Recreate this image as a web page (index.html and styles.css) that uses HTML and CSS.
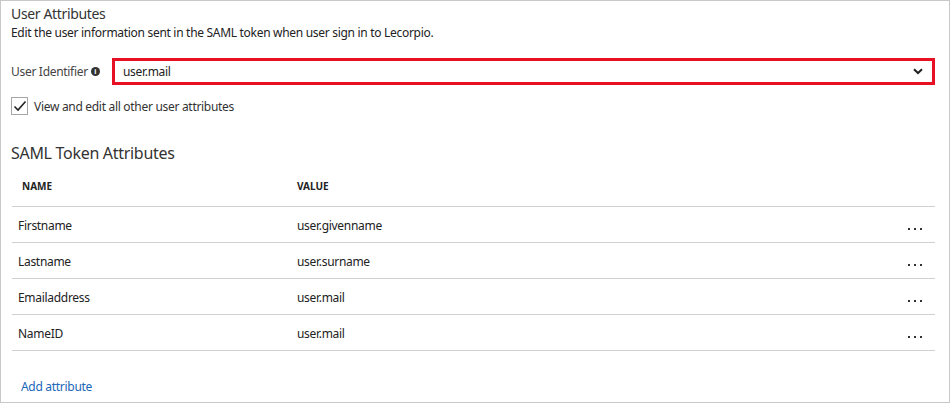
FILE: index.html
```html
<!DOCTYPE html>
<html>
<head>
<meta charset="utf-8">
<link rel="stylesheet" href="styles.css">
</head>
<body>
<div class="panel">
  <div class="title">User Attributes</div>
  <div class="desc">Edit the user information sent in the SAML token when user sign in to Lecorpio.</div>
  <div class="ident-row">
    <div class="ident-label">User Identifier <span class="info">i</span></div>
    <div class="select">
      <span>user.mail</span>
      <svg class="chev" width="10" height="7" viewBox="0 0 10 7"><path d="M1 1.2 L5 5 L9 1.2" fill="none" stroke="#222" stroke-width="2"/></svg>
    </div>
  </div>
  <div class="check-row">
    <div class="checkbox"><svg width="14" height="12" viewBox="0 0 14 12"><path d="M1.5 6.5 L5 10 L12.5 1.5" fill="none" stroke="#222" stroke-width="1.6"/></svg></div>
    <span>View and edit all other user attributes</span>
  </div>
  <div class="subtitle">SAML Token Attributes</div>
  <div class="table">
    <div class="thead">
      <div class="c-name">NAME</div>
      <div class="c-val">VALUE</div>
    </div>
    <div class="tr"><div class="c-name">Firstname</div><div class="c-val">user.givenname</div><div class="more"><i></i><i></i><i></i></div></div>
    <div class="tr"><div class="c-name">Lastname</div><div class="c-val">user.surname</div><div class="more"><i></i><i></i><i></i></div></div>
    <div class="tr"><div class="c-name">Emailaddress</div><div class="c-val">user.mail</div><div class="more"><i></i><i></i><i></i></div></div>
    <div class="tr"><div class="c-name">NameID</div><div class="c-val">user.mail</div><div class="more"><i></i><i></i><i></i></div></div>
  </div>
  <a class="add" href="#">Add attribute</a>
</div>
</body>
</html>
```
FILE: styles.css
```css
html, body {
  margin: 0;
  padding: 0;
  background: #fff;
}
body {
  font-family: "Noto Sans", "Open Sans", sans-serif;
  color: #222;
  letter-spacing: -0.3px;
}
.panel {
  box-sizing: border-box;
  width: 950px;
  height: 403px;
  border: 1px solid #c8c8c8;
  padding: 3px 14px 0 10px;
}
.title {
  font-size: 14px;
  letter-spacing: -0.35px;
  line-height: 20px;
  color: #333;
}
.desc {
  font-size: 12px;
  line-height: 18px;
  color: #222;
}
.ident-row {
  display: flex;
  align-items: center;
  margin-top: 16px;
}
.ident-label {
  width: 101px;
  font-size: 12px;
  color: #444;
  display: flex;
  align-items: center;
  gap: 3px;
}
.info {
  display: inline-flex;
  width: 9px;
  height: 9px;
  border-radius: 50%;
  background: #333;
  color: #fff;
  font-size: 7px;
  font-weight: bold;
  align-items: center;
  justify-content: center;
  line-height: 1;
  letter-spacing: 0;
}
.select {
  flex: 1;
  box-sizing: border-box;
  height: 27px;
  border: 3px solid #e81123;
  display: flex;
  align-items: center;
  justify-content: space-between;
  padding: 0 9px 0 8px;
  font-size: 12px;
  color: #222;
}
.chev { display: block; }
.check-row {
  display: flex;
  align-items: center;
  gap: 6px;
  margin-top: 12px;
  font-size: 12px;
  color: #333;
}
.checkbox {
  box-sizing: border-box;
  width: 17px;
  height: 18px;
  border: 1px solid #a6a6a6;
  display: flex;
  align-items: center;
  justify-content: center;
}
.subtitle {
  margin-top: 27px;
  font-size: 16px;
  line-height: 22px;
  color: #333;
}
.table {
  margin-top: 10px;
  margin-left: 1px;
}
.thead {
  box-sizing: border-box;
  display: flex;
  align-items: center;
  height: 33px;
  border-bottom: 1px solid #d0d0d0;
  font-size: 10px;
  font-weight: bold;
  letter-spacing: 0;
  padding-bottom: 8px;
}
.thead .c-name { padding-left: 10px; width: 275px; }
.tr {
  box-sizing: border-box;
  display: flex;
  align-items: center;
  height: 36px;
  padding-top: 2px;
  border-bottom: 1px solid #d0d0d0;
  font-size: 12px;
  color: #222;
}
.tr .c-name { padding-left: 6px; width: 279px; }
.c-val { flex: 1; }
.more {
  display: flex;
  gap: 4px;
  margin-right: 13px;
  padding-top: 7px;
}
.more i {
  display: block;
  width: 2px;
  height: 2px;
  background: #333;
}
.add {
  display: inline-block;
  margin-top: 27px;
  margin-left: 10px;
  font-size: 12px;
  color: #1a66b8;
  text-decoration: none;
}
```
